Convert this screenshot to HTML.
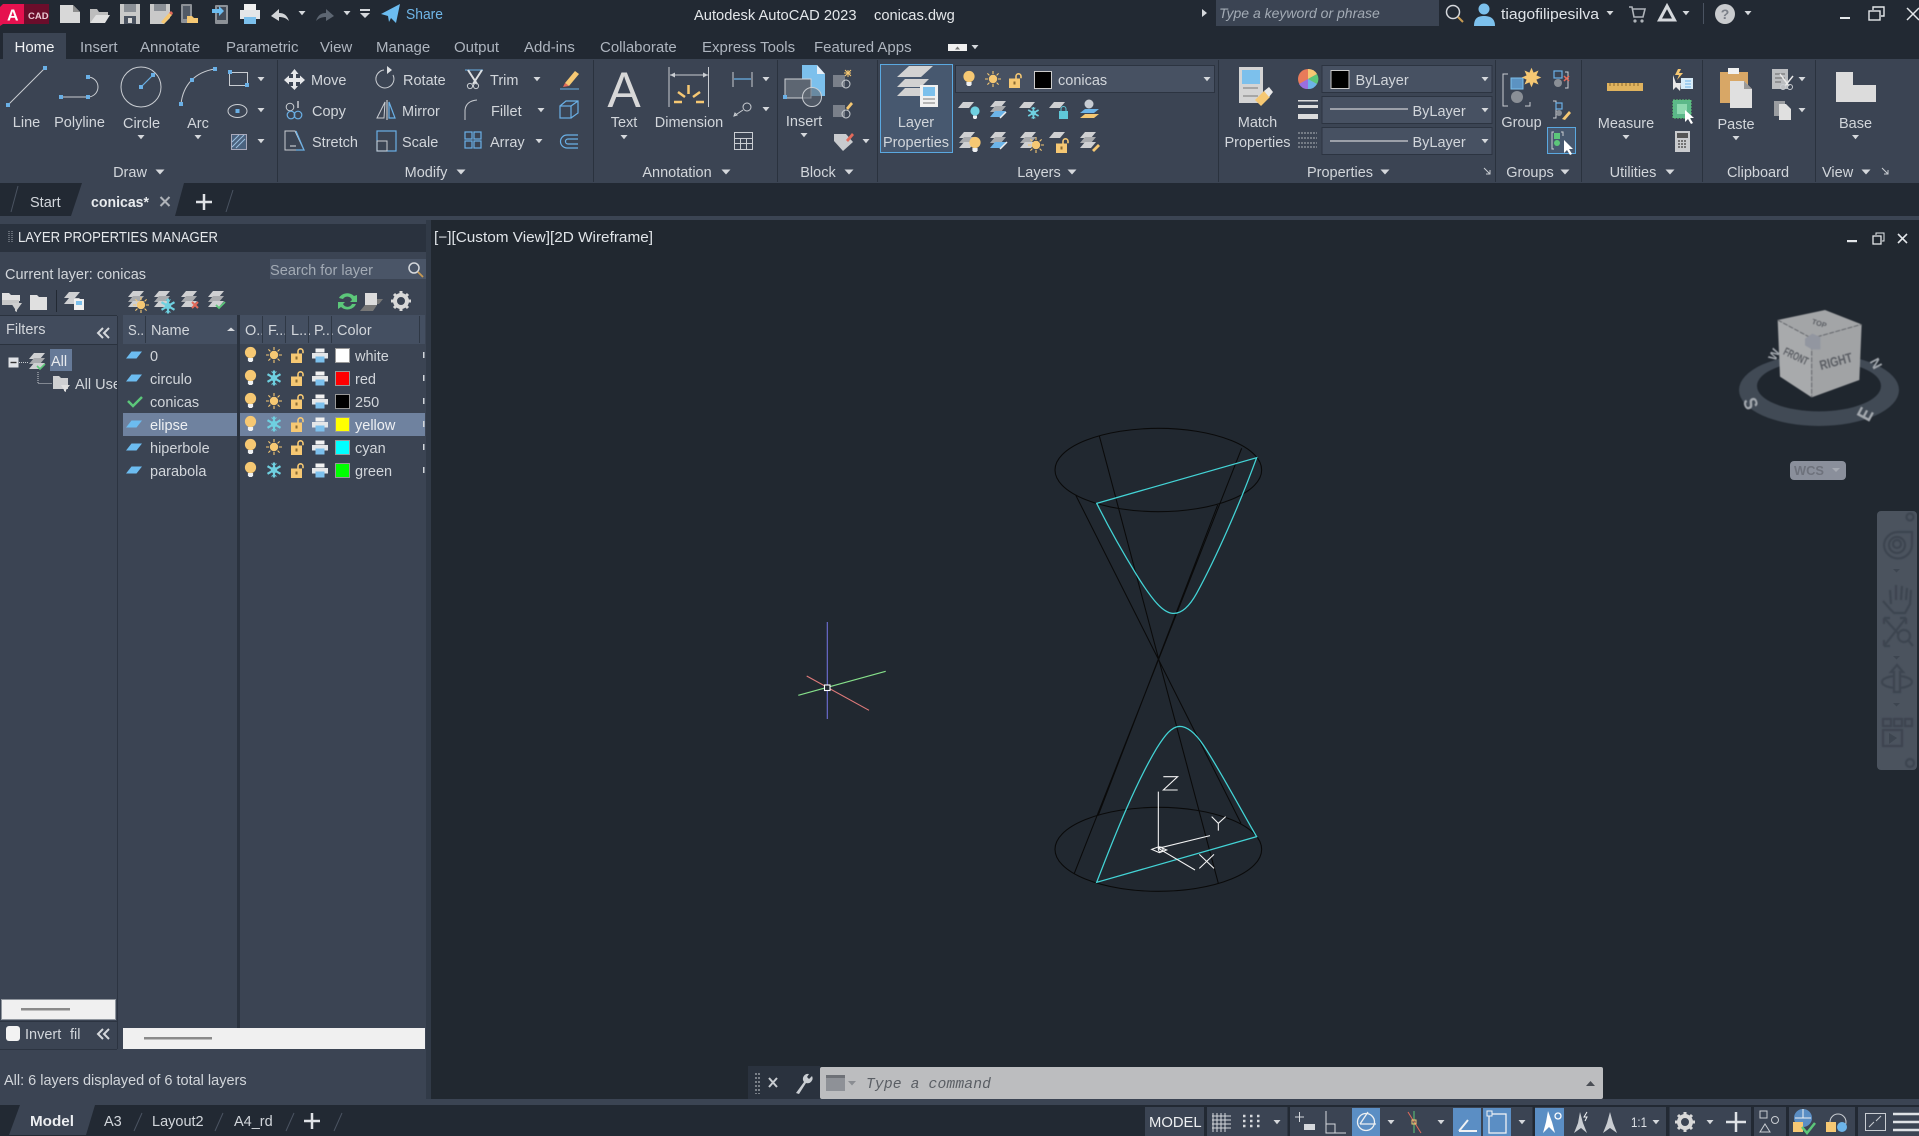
<!DOCTYPE html>
<html><head><meta charset="utf-8"><title>AutoCAD</title>
<style>
html,body{margin:0;padding:0;background:#212830;width:1919px;height:1136px;overflow:hidden}
svg{display:block;position:absolute;left:0;top:0}
text{font-family:"Liberation Sans",sans-serif;font-size:14.5px;fill:#dfe3e8}
.m{text-anchor:middle}
.t{font-size:15px;fill:#aeb5bf}
.p{fill:#d2d6db}
.g{fill:none;stroke:#c9cdd2;stroke-width:1}
.b{fill:none;stroke:#6ab0e6;stroke-width:1.2}
</style></head><body>
<svg width="1919" height="1136" viewBox="0 0 1919 1136" xmlns="http://www.w3.org/2000/svg">
<defs>
<path id="dn" d="M-3.5-2h7L0 2.2z" fill="#d5d8dc"/>
<path id="dl" d="M-4.5-2.5h9L0 2.5z" fill="#d5d8dc"/>
<rect id="h" x="-2" y="-2" width="4" height="4" fill="#6ab0e6"/>
<g id="bulb"><circle cy="-2.5" r="5.6" fill="#f6c873"/><path d="M-2.6 3h5.2v2.6l-1.2 1.4h-2.8l-1.2-1.4z" fill="#eef0f2"/></g>
<g id="bulbc"><circle cy="-2" r="4.6" fill="#6fd0e0"/><path d="M-2 2.6h4v2.4l-1 1h-2l-1-1z" fill="#eef0f2"/></g>
<g id="sun"><circle r="4.2" fill="#f6c873"/><path d="M0-8v3M0 5v3M-8 0h3M5 0h3M-5.6-5.6l2 2M3.6 3.6l2 2M-5.6 5.6l2-2M3.6-3.6l2-2" stroke="#f6c873" stroke-width="1.1"/></g>
<g id="snow"><path d="M0-7.5v15M-6.5-3.8l13 7.6M-6.5 3.8l13-7.6" stroke="#6fd0e0" stroke-width="2.2"/><circle r="3.2" fill="#6fd0e0"/><path d="M-2.500-6.500L0-4.500 2.500-6.500M-2.500 6.500L0 4.500 2.500 6.500" fill="none" stroke="#6fd0e0"/></g>
<g id="lock"><rect x="-7" y="-2.5" width="11" height="9.5" fill="#f6c873"/><rect x="-2.5" y="0.5" width="2" height="3" fill="#8a6a30"/><path d="M0-2.5v-2.2a2.5 2.5 0 0 1 5 0v2" fill="none" stroke="#f6c873" stroke-width="1.6"/></g>
<g id="prn"><rect x="-4.5" y="-7" width="9" height="4" fill="#f2f2f2"/><rect x="-8" y="-2.5" width="16" height="5.5" fill="#e4e6e8"/><rect x="-4.5" y="1" width="9" height="6" fill="#7cc0ec"/></g>
<path id="pl" d="M-8 3.5L-2.5-3.5H8L2.5 3.5z" fill="#6cbcf0"/>
<path id="pg" d="M-8 3L-3-3H8L3 3z" fill="#cfd0d2"/>
<g id="stk"><path d="M-8-2L-3-8H8L3-2z" fill="#cfd0d2"/><path d="M-8 3L-3-3H8L3 3z" fill="#a9abae"/><path d="M-8 8L-3 2H8L3 8z" fill="#cfd0d2"/></g>
<g id="stkb"><path d="M-8-2L-3-8H8L3-2z" fill="#cfd0d2"/><path d="M-8 3L-3-3H8L3 3z" fill="#a9abae"/><path d="M-8 8L-3 2H8L3 8z" fill="#6cb4e8"/></g>
</defs>

<!-- top chrome -->
<rect width="1919" height="1136" fill="#212830"/>
<rect x="0" y="0" width="1919" height="59" fill="#222933"/>
<rect x="0" y="59" width="1919" height="124" fill="#3b4453"/>
<rect x="0" y="183" width="1919" height="33" fill="#222933"/>
<rect x="0" y="216" width="1919" height="4" fill="#3b4453"/>

<!-- logo -->
<path d="M0 7l3-3h21v20H3l-3 2z" fill="#e6114f"/>
<text x="7" y="20.5" style="font-size:16px;font-weight:bold;fill:#fff">A</text>
<rect x="24" y="4" width="25" height="20" fill="#6b0d2b"/>
<text x="28" y="19" style="font-size:9.5px;font-weight:bold;fill:#e8c9d3">CAD</text>

<!-- QAT -->
<path d="M60 5h13l7 7v11H60z" fill="#d8d8d8"/><path d="M73 5v7h7z" fill="#8e8e8e"/>
<path d="M90 9h7l2 3h9v3H97l-7 8z" fill="#bdbdbd"/><path d="M96 15h14l-5 8H90z" fill="#e0e0e0"/>
<path d="M120 4h20v20h-20z" fill="#c9c9c9"/><rect x="124" y="4" width="12" height="8" fill="#8a8f96"/><rect x="124" y="16" width="12" height="8" fill="#4a5260"/><rect x="128" y="18" width="4" height="5" fill="#d8d8d8"/>
<path d="M150 4h20v14l-6 6h-14z" fill="#c9c9c9"/><rect x="154" y="4" width="12" height="7" fill="#8a8f96"/><path d="M161 22l8-9 3 2-8 9z" fill="#f6c873"/><path d="M169 13l3 2 1-2-2-2z" fill="#e36a5a"/>
<rect x="181" y="4" width="11" height="19" rx="1" fill="#8d9197"/><rect x="183" y="6" width="7" height="13" fill="#525a66"/><path d="M187 16h5l2 2h4v5h-11z" fill="#f6c873"/>
<rect x="215" y="5" width="13" height="19" rx="1" fill="#8d9197"/><rect x="217" y="7" width="9" height="13" fill="#424a57"/><path d="M212 9h7v-3l5 5-5 5v-3h-7z" fill="#6cbcf0"/>
<rect x="244" y="4" width="12" height="6" fill="#f0f0f0"/><rect x="240" y="10" width="20" height="9" fill="#e4e6e8"/><rect x="244" y="17" width="12" height="7" fill="#7cc0ec"/>
<path d="M271 16l8-7v4c5 0 8 2 10 8-3-3-6-4-10-4v4z" fill="#d2d4d7"/>
<use href="#dn" x="302" y="13"/>
<path d="M334 16l-8-7v4c-5 0-8 2-10 8 3-3 6-4 10-4v4z" fill="#5d6672"/>
<use href="#dn" x="347" y="13"/>
<path d="M360 9h10v2h-10zM360 13h10l-5 5z" fill="#d5d8dc"/>
<path d="M381 14l19-10-4 19-5-5-2 4-1-6z" fill="#6cbcf0"/>
<text x="406" y="19" textLength="37" lengthAdjust="spacingAndGlyphs" style="fill:#6fb6e8;font-size:14.5px">Share</text>

<!-- title -->
<text x="694" y="20" style="font-size:14.7px;fill:#e4e7ea">Autodesk AutoCAD 2023</text>
<text x="874" y="20" style="font-size:14.7px;fill:#e4e7ea">conicas.dwg</text>
<path d="M1202 9l5 4-5 4z" fill="#d5d8dc"/>
<rect x="1216" y="0" width="223" height="26" fill="#3b4453"/>
<text x="1219" y="18" style="font-style:italic;font-size:14px;fill:#a3abb5">Type a keyword or phrase</text>
<circle cx="1453" cy="12" r="6.5" fill="none" stroke="#d5d8dc" stroke-width="1.5"/><path d="M1458 17l5 5" stroke="#c79a52" stroke-width="2"/>
<circle cx="1484" cy="9" r="5.5" fill="#7cc0ec"/><path d="M1474 26c0-8 4-10 10-10s11 2 11 10z" fill="#7cc0ec"/>
<text x="1501" y="19" textLength="98" lengthAdjust="spacingAndGlyphs" style="font-size:14.6px">tiagofilipesilva</text>
<use href="#dn" x="1610" y="13"/>
<path d="M1629 7h3l2 10h9l2-8h-13" fill="none" stroke="#aeb3b9" stroke-width="1.6"/><circle cx="1635" cy="21" r="1.6" fill="#aeb3b9"/><circle cx="1642" cy="21" r="1.6" fill="#aeb3b9"/>
<path d="M1667 6l7.500 14h-15z" fill="none" stroke="#d5d8dc" stroke-width="3"/>
<use href="#dn" x="1686" y="13"/>
<rect x="1703" y="3" width="1" height="21" fill="#4a5361"/>
<circle cx="1725" cy="14" r="10" fill="#c9cbce"/><text x="1725" y="19" class="m" style="font-size:14px;font-weight:bold;fill:#7b8088">?</text>
<use href="#dn" x="1748" y="13"/>
<rect x="1840" y="17" width="10" height="2" fill="#e4e7ea"/>
<rect x="1869" y="11" width="11" height="9" fill="none" stroke="#e4e7ea" stroke-width="1.4"/><path d="M1873 10V7h11v9h-3" fill="none" stroke="#e4e7ea" stroke-width="1.4"/>
<path d="M1907 8l12 12M1919 8l-12 12" stroke="#e4e7ea" stroke-width="1.5"/>

<!-- ribbon tabs -->
<rect x="3" y="33" width="63" height="26" fill="#3b4453"/>
<text x="14.5" y="52" style="font-size:15px;fill:#f0f2f4">Home</text>
<text x="80" y="52" class="t">Insert</text><text x="140" y="52" class="t">Annotate</text><text x="226" y="52" class="t">Parametric</text><text x="320" y="52" class="t">View</text><text x="376" y="52" class="t">Manage</text><text x="454" y="52" class="t">Output</text><text x="524" y="52" class="t">Add-ins</text><text x="600" y="52" class="t">Collaborate</text><text x="702" y="52" class="t">Express Tools</text><text x="814" y="52" class="t">Featured Apps</text>
<rect x="948" y="44" width="19" height="7" fill="#f0f0f0"/><path d="M955 49.5h5l-2.5-3z" fill="#777"/><use href="#dn" x="975" y="47"/>

<!-- ribbon separators -->
<g fill="#2a323e"><rect x="277" y="60" width="1" height="122"/><rect x="593" y="60" width="1" height="122"/><rect x="777" y="60" width="1" height="122"/><rect x="877" y="60" width="1" height="122"/><rect x="1218" y="60" width="1" height="122"/><rect x="1495" y="60" width="1" height="122"/><rect x="1581" y="60" width="1" height="122"/><rect x="1702" y="60" width="1" height="122"/><rect x="1815" y="60" width="1" height="122"/></g>

<!-- DRAW -->
<path d="M8 105L45 68" class="g"/><use href="#h" x="8" y="105"/><use href="#h" x="45" y="68"/>
<path d="M61 97H88M88 97A10 10 0 0 0 88 77" class="g"/><use href="#h" x="61" y="97"/><use href="#h" x="88" y="97"/><use href="#h" x="88" y="77"/>
<circle cx="141" cy="87" r="20" class="g"/><path d="M141 87L153 75" stroke="#6ab0e6" stroke-width="1.2"/><use href="#h" x="141" y="87"/><use href="#h" x="153" y="75"/>
<path d="M181 104C183 85 195 72 215 69" class="g"/><use href="#h" x="181" y="104"/><use href="#h" x="192" y="80"/><use href="#h" x="215" y="69"/>
<text x="26.5" y="127" class="m p">Line</text><text x="79.5" y="127" class="m p">Polyline</text><text x="141.5" y="128" class="m p">Circle</text><text x="198" y="128" class="m p">Arc</text>
<use href="#dn" x="141" y="137"/><use href="#dn" x="198" y="137"/>
<rect x="229.500" y="72.500" width="18" height="13" class="g"/><use href="#h" x="230" y="72"/><use href="#h" x="247" y="85"/>
<ellipse cx="237.5" cy="111" rx="9.5" ry="6.5" class="g"/><use href="#h" x="237.5" y="111"/><use href="#dn" x="261" y="79"/><use href="#dn" x="261" y="110"/><use href="#dn" x="261" y="141"/>
<rect x="231.500" y="134.500" width="15" height="15" fill="#4b627e" stroke="#aab" stroke-width="1"/><path d="M232 147l12-12M236 148l9-9M232 142l7-7" stroke="#9cc0e0"/>
<text x="130" y="177" class="m p">Draw</text><use href="#dl" x="160" y="172"/>

<!-- MODIFY -->
<path d="M294.5 69l4 5h-2.5v4h4v-2.5l5 4.500-5 4.500V82h-4v4H298l-3.500 4-4-4H293v-4h-4v2.500l-5-4.500 5-4.500V78h4v-4h-2.500z" fill="#e6e8ea"/>
<text x="311" y="85" class="p">Move</text><text x="312" y="116" class="p">Copy</text><text x="312" y="147" class="p">Stretch</text>
<circle cx="290" cy="107" r="3.800" class="g"/><circle cx="291" cy="115" r="3.800" class="b"/><circle cx="298" cy="115" r="3.800" class="b"/><path d="M298 101v7" stroke="#dcdfe2" stroke-width="1.300"/>
<path d="M285 131h10l9 19h-19z M285 150" class="g"/><path d="M296 131l8 19h-8" class="b"/><path d="M290 146h6" stroke="#dfe2e6"/>
<path d="M384 70a9 9 0 1 0 9 5" class="g"/><path d="M387 66l5 4-5 4z" fill="#dcdfe2"/>
<text x="403" y="85" class="p">Rotate</text><text x="402" y="116" class="p">Mirror</text><text x="402" y="147" class="p">Scale</text>
<path d="M385 102L377 118h7z" class="g"/><path d="M389 102l6 16h-6z" class="b"/><path d="M387 100v20" stroke="#dcdfe2"/>
<rect x="377" y="131" width="19" height="20" class="b"/><rect x="377" y="141" width="10" height="10" class="g"/>
<path d="M465 70h18" stroke="#6ab0e6"/><path d="M468 70l9 14M482 70l-9 14" stroke="#dcdfe2" stroke-width="2"/><circle cx="470" cy="86" r="2.600" class="g"/><circle cx="476" cy="86" r="2.600" class="g"/>
<text x="490" y="85" class="p">Trim</text><text x="491" y="116" class="p">Fillet</text><text x="490" y="147" class="p">Array</text>
<use href="#dn" x="537" y="79"/><use href="#dn" x="541" y="110"/><use href="#dn" x="539" y="141"/>
<path d="M465 120v-10q1-9 12-10" class="g"/>
<g class="b"><rect x="465" y="132" width="7" height="7"/><rect x="474" y="132" width="7" height="7"/><rect x="465" y="141" width="7" height="7"/><rect x="474" y="141" width="7" height="7"/></g>
<path d="M565 83l10-12 4 3-10 12z" fill="#f6c873"/><path d="M563 87l2-4 4 3z" fill="#e36a5a"/><path d="M560 89h19" stroke="#6ab0e6"/>
<rect x="560" y="106" width="11" height="12" class="b"/><path d="M560 106l6-5h12v12l-7 5M571 106l7-5" class="b"/>
<path d="M578 135h-11a6 6 0 0 0 0 13h11M578 139h-10a2.500 2.500 0 0 0 0 5h10" class="b"/>
<text x="426" y="177" class="m p">Modify</text><use href="#dl" x="461" y="172"/>

<!-- ANNOTATION -->
<text x="624" y="107" class="m" style="font-size:50px;fill:#d8d8d8">A</text>
<text x="624" y="127" class="m p">Text</text><use href="#dn" x="624" y="137"/>
<path d="M669 67v40M708.500 67v40" stroke="#c9cdd2"/><path d="M670 75h38" stroke="#c9cdd2"/><path d="M670 75l5-2.500v5zM708 75l-5-2.500v5z" fill="#c9cdd2"/>
<path d="M688.500 85v9M678 92l7 5M700 92l-7 5M674 102h8M704 102h-8" stroke="#f6c873" stroke-width="2.500"/>
<text x="689" y="127" class="m p">Dimension</text>
<path d="M733 72v15M752 72v15" stroke="#c9cdd2"/><path d="M734 79h17" stroke="#6ab0e6" stroke-width="1.300"/><use href="#dn" x="766" y="79"/>
<circle cx="747" cy="107" r="4" class="g"/><path d="M743 110l-9 6M734 116l3-1-2-2z" class="g"/><use href="#dn" x="766" y="109"/>
<rect x="734.500" y="132.500" width="18" height="17" class="g"/><path d="M734 138.500h18M734 143.500h18M740.500 138v11M746.500 138v11" stroke="#c9cdd2"/>
<text x="677" y="177" class="m p">Annotation</text><use href="#dl" x="726" y="172"/>

<!-- BLOCK -->
<path d="M802 65h15l8 9v22h-23z" fill="#7cc0ec"/><path d="M817 65v9h8z" fill="#e6eef6"/>
<rect x="785" y="79" width="26" height="19" fill="#5d6672" stroke="#cfd2d6"/><circle cx="812" cy="97" r="9.500" fill="#5d6672" fill-opacity=".6" stroke="#c9cdd2"/><use href="#h" x="785" y="97" style="fill:#fff"/>
<text x="804" y="126" class="m p">Insert</text><use href="#dn" x="804" y="135"/>
<g><rect x="833" y="75" width="12" height="12" fill="#7a808a"/><circle cx="846" cy="84" r="4" class="g"/><path d="M848 77l0-7M844 73l7 0M845 70l6 6M851 70l-6 6" stroke="#f6c873"/></g>
<g><rect x="833" y="105" width="12" height="12" fill="#7a808a"/><circle cx="846" cy="114" r="4" class="g"/><path d="M846 108l5-6 2 2-5 6z" fill="#f6c873"/></g>
<path d="M834 134h12l7 8-10 9-9-10z" fill="#c9cbce"/><path d="M846 140l6-7 2 2-6 7z" fill="#e36a5a"/><use href="#dn" x="866" y="141"/>
<text x="818" y="177" class="m p">Block</text><use href="#dl" x="849" y="172"/>

<!-- LAYERS -->
<rect x="880.500" y="64.500" width="72" height="88" fill="#47586f" stroke="#5aa8e0"/>
<path d="M897 87l8-8h24l-8 8zM897 77l12-11h24l-12 11z" fill="#d2d2d2"/><path d="M897 96l8-8h24l-8 8z" fill="#d2d2d2"/>
<rect x="920" y="85" width="18" height="22" fill="#f0f0f0"/><rect x="923" y="87" width="12" height="9" fill="#7cc0ec"/><path d="M923 99h12M923 103h12" stroke="#777"/>
<text x="916" y="127" class="m p">Layer</text><text x="916" y="147" class="m p">Properties</text>
<rect x="955.500" y="65.500" width="259" height="27" fill="#475162" stroke="#2c3441"/>
<use href="#bulb" x="969" y="79"/><use href="#sun" x="993" y="79"/><use href="#lock" x="1016" y="81"/>
<rect x="1034.500" y="71.500" width="17" height="17" fill="#000" stroke="#ccc"/>
<text x="1058" y="85" class="p">conicas</text><use href="#dn" x="1207" y="79"/>
<!-- layer rows -->
<use href="#pg" x="966" y="105"/><use href="#bulbc" x="975" y="113"/>
<use href="#stkb" x="998" y="109"/><path d="M1000 118l6-6" stroke="#eee" stroke-width="1.500"/>
<use href="#pg" x="1027" y="105"/><use href="#snow" x="1033" y="113" transform="translate(207 22.600) scale(.8)"/>
<use href="#pg" x="1057" y="105"/><rect x="1059" y="111" width="9" height="8" fill="#5fc8d8"/><path d="M1061 111v-2a2.500 2.500 0 0 1 5 0v2" fill="none" stroke="#5fc8d8"/>
<circle cx="1089" cy="104" r="4.500" fill="#c8ccd2"/><path d="M1080 113l5-4h14l-5 4z" fill="#6cb4e8"/><path d="M1080 118l5-4h14l-5 4z" fill="#f6c873"/>
<use href="#stk" x="967" y="140"/><use href="#bulb" x="975" y="145"/>
<use href="#stkb" x="998" y="140"/><path d="M1000 149l7-7" stroke="#eee" stroke-width="1.500"/>
<use href="#stk" x="1028" y="140"/><use href="#sun" x="1036" y="145"/>
<use href="#pg" x="1057" y="135"/><use href="#lock" x="1063" y="146"/>
<use href="#stk" x="1088" y="140"/><path d="M1092 150l6-6 2 2-6 6z" fill="#f6c873"/>
<text x="1039" y="177" class="m p">Layers</text><use href="#dl" x="1072" y="172"/>

<!-- PROPERTIES -->
<rect x="1239" y="67" width="24" height="36" fill="#d4d4d4"/><rect x="1242" y="70" width="18" height="14" fill="#7cc0ec"/><path d="M1243 88h15M1243 96h15" stroke="#777"/>
<path d="M1255 100l9-9 6 6-9 9z" fill="#f6c873"/><path d="M1264 91l5-4 4 5-4 5z" fill="#e8e8e8"/>
<text x="1257.500" y="127" class="m p">Match</text><text x="1257.500" y="147" class="m p">Properties</text>
<circle cx="1308" cy="79" r="10" fill="#e87b5a"/><path d="M1308 79V69a10 10 0 0 1 9 5z" fill="#f6c873"/><path d="M1308 79l9-5a10 10 0 0 1 0 10z" fill="#5cc77a"/><path d="M1308 79l9 5a10 10 0 0 1-9 5z" fill="#6cb4e8"/><path d="M1308 79v10a10 10 0 0 1-9-5z" fill="#9a6fe0"/>
<rect x="1298" y="100" width="20" height="1.500" fill="#dcdcdc"/><rect x="1298" y="105" width="20" height="3" fill="#dcdcdc"/><rect x="1298" y="114" width="20" height="5" fill="#dcdcdc"/>
<path d="M1298 133h19M1298 138h19M1298 143h19M1298 147h19" stroke="#aeb2b7" stroke-dasharray="2 1"/>
<rect x="1322" y="65.500" width="170" height="27" fill="#475162" stroke="#2c3441"/><rect x="1322" y="96.500" width="170" height="27" fill="#475162" stroke="#2c3441"/><rect x="1322" y="127.500" width="170" height="27" fill="#475162" stroke="#2c3441"/>
<rect x="1331" y="70.500" width="18" height="18" fill="#000" stroke="#ccc"/>
<text x="1355.500" y="85" class="p">ByLayer</text>
<path d="M1330 109h78M1330 141h78" stroke="#f0f0f0"/>
<text x="1412.500" y="116" class="p">ByLayer</text><text x="1412.500" y="147" class="p">ByLayer</text>
<use href="#dn" x="1485" y="79"/><use href="#dn" x="1485" y="110"/><use href="#dn" x="1485" y="141"/>
<text x="1340" y="177" class="m p">Properties</text><use href="#dl" x="1385" y="172"/>
<path d="M1484 168l6 6M1490 170v4h-4" stroke="#c9cdd2" fill="none"/>

<!-- GROUPS -->
<path d="M1508 74h-5v32h5M1525 106h5v-4" class="g"/><rect x="1511" y="78" width="12" height="11" fill="#5c93c2" stroke="#7cc0ec"/><circle cx="1517" cy="97" r="6" fill="#8a8f96"/>
<path transform="translate(1531.500 77.500) scale(.7) translate(-1530 -81)" d="M1530 67l3 7 7-3-3 7 7 3-7 3 3 7-7-3-3 7-3-7-7 3 3-7-7-3 7-3-3-7 7 3z" fill="#f6c873"/>
<text x="1521.500" y="127" class="m p">Group</text>
<rect x="1554" y="71" width="8" height="7" class="b"/><circle cx="1558" cy="83" r="4" fill="#8a8f96"/><path d="M1565 72h3v16h-3" class="g"/><path d="M1564 76l5 5M1569 76l-5 5" stroke="#e36a5a" stroke-width="1.500"/>
<path d="M1553 101h3v17h-3M1555 101" class="g"/><rect x="1556" y="103" width="6" height="6" class="b"/><circle cx="1559" cy="113" r="3" fill="#8a8f96"/><path d="M1562 119l7-8 2 2-6 7z" fill="#f6c873"/>
<rect x="1547.500" y="127.500" width="28" height="26" fill="#47586f" stroke="#5aa8e0"/><path d="M1554 132h-2v17h2M1561 132h2v4" class="g"/><rect x="1554" y="133" width="6" height="6" fill="#5cc77a"/><circle cx="1557" cy="143" r="3" fill="#5cc77a"/><path d="M1564 140v13l3-3 3 5 2-1-3-5h4z" fill="#fff"/>
<text x="1530" y="177" class="m p">Groups</text><use href="#dl" x="1565" y="172"/>

<!-- UTILITIES -->
<rect x="1607" y="83" width="36" height="8" fill="#e0b35e"/><path d="M1610 83v3M1614 83v3M1618 83v3M1622 83v3M1626 83v3M1630 83v3M1634 83v3M1638 83v3" stroke="#8a6a30"/>
<text x="1626" y="128" class="m p">Measure</text><use href="#dn" x="1626" y="137"/>
<path d="M1673 75v15l3-3 4 4 1-8h-5z" fill="#e8e8e8"/><path d="M1678 69l-3 6h4l-2 5 6-7h-4l2-4z" fill="#f6c873"/><rect x="1681" y="78" width="12" height="11" fill="#d8ecf8"/><path d="M1685 81h6M1685 84h6M1685 87h6" stroke="#6ab0e6"/>
<rect x="1673" y="100" width="18" height="18" fill="#5cb88a" stroke="#5cc77a" stroke-dasharray="2 1"/><rect x="1677" y="104" width="10" height="10" fill="#8ed9b0"/><path d="M1685 110v12l3-3 3 5 2-1-3-5h4z" fill="#fff"/>
<rect x="1675" y="131" width="15" height="21" fill="#c9cbce"/><rect x="1677" y="133" width="11" height="5" fill="#555"/><path d="M1678 141h9M1678 144h9M1678 147h9" stroke="#555" stroke-width="1.500" stroke-dasharray="2 1"/>
<text x="1633" y="177" class="m p">Utilities</text><use href="#dl" x="1670" y="172"/>

<!-- CLIPBOARD -->
<rect x="1720" y="72" width="28" height="31" fill="#d8a766"/><rect x="1728" y="68" width="11" height="6" fill="#f0f0f0"/><path d="M1730 81h14l8 8v19h-22z" fill="#e0e0e0"/><path d="M1744 81v8h8z" fill="#9a9a9a"/>
<text x="1736" y="129" class="m p">Paste</text><use href="#dn" x="1736" y="138"/>
<rect x="1772" y="69" width="16" height="20" fill="#bcbec1"/><path d="M1775 74h10M1775 78h10M1775 82h6" stroke="#666"/><path d="M1780 74l9 12M1793 76l-8 10" stroke="#e8e8e8" stroke-width="1.500"/><circle cx="1783" cy="87" r="2.500" class="g"/><circle cx="1790" cy="87" r="2.500" class="g"/><use href="#dn" x="1802" y="79"/>
<rect x="1774" y="101" width="11" height="15" fill="#9a9da1"/><path d="M1779 104h7l5 5v11h-12z" fill="#e0e0e0"/><use href="#dn" x="1802" y="110"/>
<text x="1758" y="177" class="m p">Clipboard</text>

<!-- VIEW -->
<path d="M1836 72h17v13h23v17h-40z" fill="#dcdcdc"/>
<text x="1855.500" y="128" class="m p">Base</text><use href="#dn" x="1855.500" y="137"/>
<text x="1822" y="177" class="p">View</text><use href="#dl" x="1866" y="172"/>
<path d="M1882 168l6 6M1888 170v4h-4" stroke="#c9cdd2" fill="none"/>

<!-- DOC TABS -->
<path d="M11 212l7-26" stroke="#4a5361"/>
<text x="30" y="207" class="p">Start</text>
<path d="M71 216l11-33h102l-9 33z" fill="#3b4453"/>
<text x="91" y="207" textLength="58" lengthAdjust="spacingAndGlyphs" style="font-weight:bold;fill:#e8ebee">conicas*</text>
<path d="M160.500 197l9 9M169.500 197l-9 9" stroke="#aeb2b8" stroke-width="2"/>
<path d="M204 194v16M196 202h16" stroke="#dfe2e6" stroke-width="2.500"/>
<path d="M226 212l7-22" stroke="#4a5361"/>

<!-- VIEWPORT -->
<text x="434" y="242" textLength="219" lengthAdjust="spacingAndGlyphs" style="font-size:14.8px;fill:#e0e4e8">[−][Custom View][2D Wireframe]</text>
<rect x="1847" y="240" width="10" height="2.200" fill="#e4e7ea"/>
<rect x="1873" y="236" width="8" height="8" fill="none" stroke="#e4e7ea" stroke-width="1.300"/><path d="M1876 235v-2h8v8h-2" fill="none" stroke="#e4e7ea"/>
<path d="M1898 234l9 9M1907 234l-9 9" stroke="#e4e7ea" stroke-width="1.600"/>

<!-- LAYER MANAGER -->
<rect x="0" y="220" width="426" height="880" fill="#3b4453"/>
<rect x="426" y="220" width="5" height="885" fill="#313a47"/>
<rect x="0" y="224" width="426" height="28" fill="#2a323e"/>
<path d="M9 231v11M12 231v11" stroke="#a0a6ae" stroke-dasharray="1 1"/>
<text x="18" y="242" textLength="200" lengthAdjust="spacingAndGlyphs" style="font-size:14.5px;fill:#e6e9ec">LAYER PROPERTIES MANAGER</text>
<text x="5" y="279" class="p">Current layer: conicas</text>
<rect x="270" y="259" width="156" height="20" fill="#4a5567"/>
<text x="270" y="275" textLength="103" lengthAdjust="spacingAndGlyphs" style="fill:#a3abb5">Search for layer</text>
<circle cx="414" cy="268" r="5" fill="none" stroke="#d5d8dc" stroke-width="1.500"/><path d="M418 272l5 5" stroke="#c79a52" stroke-width="1.800"/>
<!-- toolbar -->
<path d="M2 293h7l2 2h9v6H2z" fill="#e0e0e0"/><path d="M2 300h17v5h-17z" fill="#c8c8c8"/><path d="M11 303h11l-5 7v2l-2-1v-2z" fill="#cfcfcf"/>
<path d="M30 295h7l2 2h8v13H30z" fill="#e0e0e0"/>
<rect x="56" y="290" width="1" height="22" fill="#222933"/>
<use href="#pg" x="72" y="295"/><use href="#pg" x="72" y="301"/><rect x="74" y="299" width="10" height="11" fill="#f0f0f0"/><rect x="76" y="301" width="6" height="4" fill="#7cc0ec"/>
<use href="#stk" x="136" y="299"/><use href="#sun" x="141" y="305"/>
<use href="#stk" x="162" y="299"/><use href="#snow" x="168" y="306"/>
<use href="#stk" x="189" y="299"/><path d="M192 302l6 6M198 302l-6 6" stroke="#e36a5a" stroke-width="2"/>
<use href="#stk" x="216" y="299"/><path d="M216 305l3 3 6-6" fill="none" stroke="#5cc77a" stroke-width="1.800"/>
<path d="M339 298a9 8 0 0 1 15-2l3-1v7h-7l2-2a5 5 0 0 0-9-1zM356 304a9 8 0 0 1-15 3l-3 2v-7h7l-2 2a5 5 0 0 0 9 0z" fill="#5cc77a"/>
<rect x="365" y="293" width="12" height="12" fill="#dcdcdc"/><path d="M377 299h6l-4 5h-2zM365 305h12l-4 6h-13z" fill="#777"/>
<circle cx="401" cy="301" r="6" fill="none" stroke="#d8d8d8" stroke-width="4"/><path d="M401 291v4M401 307v4M391 301h4M407 301h4M394 294l3 3M405 305l3 3M408 294l-3 3M397 305l-3 3" stroke="#d8d8d8" stroke-width="3"/>
<!-- headers -->
<rect x="0" y="316" width="117" height="28" fill="#414b5c"/>
<rect x="123" y="315" width="114" height="29" fill="#444f61"/><rect x="240" y="315" width="185" height="29" fill="#444f61"/>
<path d="M0 344.500H117" stroke="#2a323e"/><path d="M0 315.500H117" stroke="#2a323e"/>
<rect x="117" y="316" width="1" height="733" fill="#2c3441"/>
<rect x="237" y="315" width="3" height="713" fill="#2a323e"/>
<text x="6" y="334" class="p">Filters</text>
<path d="M103 328l-5 5 5 5M109 328l-5 5 5 5" fill="none" stroke="#d5d8dc" stroke-width="2"/>
<text x="128" y="335" textLength="16" lengthAdjust="spacingAndGlyphs" class="p">S..</text><text x="151" y="335" class="p">Name</text><path d="M227 331h8l-4-3.500z" fill="#d5d8dc"/>
<text x="245" y="335" class="p">O..</text><text x="268" y="335" class="p">F...</text><text x="291" y="335" class="p">L...</text><text x="314" y="335" class="p">P...</text><text x="337" y="335" class="p">Color</text>
<g fill="#2f3845"><rect x="145" y="316" width="1" height="27"/><rect x="262" y="316" width="1" height="27"/><rect x="285" y="316" width="1" height="27"/><rect x="308" y="316" width="1" height="27"/><rect x="331" y="316" width="1" height="27"/><rect x="419" y="316" width="1" height="27"/></g>
<!-- tree -->
<rect x="8.500" y="357.500" width="10" height="10" fill="#dfe2e6"/><path d="M10.500 362.500h6" stroke="#333" stroke-width="1.400"/>
<path d="M19 362.500h10" stroke="#c8ccd0" stroke-dasharray="1 1"/>
<use href="#stk" x="37" y="361"/><path d="M37 366l3 3 5-5" fill="none" stroke="#5cc77a" stroke-width="1.600"/>
<rect x="50" y="349" width="22" height="22" fill="#667a98"/><text x="51" y="366" style="fill:#e8ebee">All</text>
<path d="M38 372v11.500H52" stroke="#c8ccd0" stroke-dasharray="1 1" fill="none"/>
<path d="M53 376h6l2 2h7v11H53z" fill="#cfd0d2"/><path d="M61 385h9l-4 5v2l-2-1v-1z" fill="#e0e0e0"/>
<svg x="0" y="370" width="117" height="30"><text x="75" y="19" class="p">All User Defined</text></svg>
<!-- rows -->
<rect x="123" y="413" width="114" height="23" fill="#6f829f"/><rect x="240" y="413" width="185" height="23" fill="#6f829f"/>
<use href="#pl" x="134" y="355"/><use href="#pl" x="134" y="378"/>
<path d="M128 401l5 5 9-9" fill="none" stroke="#5cc77a" stroke-width="2.500"/>
<use href="#pl" x="134" y="424"/><use href="#pl" x="134" y="447"/><use href="#pl" x="134" y="470"/>
<text x="150" y="361" class="p">0</text><text x="150" y="384" class="p">circulo</text><text x="150" y="407" class="p">conicas</text><text x="150" y="430" class="p" style="fill:#eef0f3">elipse</text><text x="150" y="453" class="p">hiperbole</text><text x="150" y="476" class="p">parabola</text>
<g>
<use href="#bulb" x="250.500" y="355"/><use href="#sun" x="274" y="355"/><use href="#lock" x="298" y="356"/><use href="#prn" x="320" y="355.500"/>
<use href="#bulb" x="250.500" y="378"/><use href="#snow" x="274" y="378"/><use href="#lock" x="298" y="379"/><use href="#prn" x="320" y="378.500"/>
<use href="#bulb" x="250.500" y="401"/><use href="#sun" x="274" y="401"/><use href="#lock" x="298" y="402"/><use href="#prn" x="320" y="401.500"/>
<use href="#bulb" x="250.500" y="424"/><use href="#snow" x="274" y="424"/><use href="#lock" x="298" y="425"/><use href="#prn" x="320" y="424.500"/>
<use href="#bulb" x="250.500" y="447"/><use href="#sun" x="274" y="447"/><use href="#lock" x="298" y="448"/><use href="#prn" x="320" y="447.500"/>
<use href="#bulb" x="250.500" y="470"/><use href="#snow" x="274" y="470"/><use href="#lock" x="298" y="471"/><use href="#prn" x="320" y="470.500"/>
</g>
<g stroke="#999" stroke-width="1"><rect x="335.500" y="348.500" width="14" height="14" fill="#fff"/><rect x="335.500" y="371.500" width="14" height="14" fill="#f00"/><rect x="335.500" y="394.500" width="14" height="14" fill="#000"/><rect x="335.500" y="417.500" width="14" height="14" fill="#ff0"/><rect x="335.500" y="440.500" width="14" height="14" fill="#0ff"/><rect x="335.500" y="463.500" width="14" height="14" fill="#0f0"/></g>
<text x="355" y="361" class="p">white</text><text x="355" y="384" class="p">red</text><text x="355" y="407" class="p">250</text><text x="355" y="430" class="p" style="fill:#eef0f3">yellow</text><text x="355" y="453" class="p">cyan</text><text x="355" y="476" class="p">green</text>
<g fill="#d2d6db"><rect x="423" y="352" width="1.500" height="6"/><rect x="423" y="375" width="1.500" height="6"/><rect x="423" y="398" width="1.500" height="6"/><rect x="423" y="421" width="1.500" height="6"/><rect x="423" y="444" width="1.500" height="6"/><rect x="423" y="467" width="1.500" height="6"/></g>
<!-- panel bottom -->
<rect x="1.500" y="999.500" width="114" height="20" fill="#f0f0f0" stroke="#8f959d"/><rect x="21" y="1008" width="49" height="2.500" fill="#8a8a8a"/>
<rect x="6" y="1026" width="14" height="15" rx="3" fill="#f2f2f2"/>
<text x="25" y="1039" class="p">Invert</text><text x="70" y="1039" class="p">fil</text>
<path d="M103 1029l-5 5 5 5M109 1029l-5 5 5 5" fill="none" stroke="#d5d8dc" stroke-width="2"/>
<path d="M0 1049.500H117M0 1021.500H117" stroke="#2c3441"/>
<rect x="123" y="1028" width="302" height="21" fill="#f0f0f0"/><rect x="144" y="1037" width="68" height="2.500" fill="#8a8a8a"/>
<text x="4" y="1085" class="p">All: 6 layers displayed of 6 total layers</text>

<!-- CANVAS GEOMETRY -->
<g transform="translate(1040 420) scale(.33333)" fill="none" stroke-width="3.200">
<g stroke="#0a0a0a">
<ellipse cx="355" cy="150" rx="310" ry="125"/>
<ellipse cx="355" cy="1288" rx="310" ry="126"/>
<path d="M178 48L535 1390M605 85L103 1360M107 225L603 1210M533 255L175 1185"/>
</g>
<g stroke="#43d4d6" stroke-width="3.800">
<path d="M170 250L650 113C600 250 530 410 470 520C445 565 420 582 398 580C370 578 340 545 290 465C250 400 210 330 170 250z"/>
<path d="M650 1250L170 1387C230 1230 290 1085 350 985C375 945 395 920 418 919C445 919 470 945 490 975C540 1050 600 1165 650 1250z"/>
</g>
<g stroke="#f4f4f4">
<path d="M355 1115V1285L510 1247M355 1285L465 1350"/>
<path d="M335 1288L357 1280L380 1290L358 1298z"/><circle cx="362" cy="1288" r="7"/>
<path d="M370 1070H413L370 1110H413"/>
<path d="M515 1190L535 1210L557 1190M535 1210V1232"/>
<path d="M478 1345L522 1303M478 1303L522 1345"/>
</g>
</g>
<!-- crosshair -->
<g fill="none" stroke-width="1.100">
<path d="M827.300 622V719" stroke="#6f6fd8"/>
<path d="M798.300 695.300L885.700 671.300" stroke="#86e08a"/>
<path d="M806.700 676L869 710.300" stroke="#e07a7a"/>
<rect x="824.500" y="685" width="5.500" height="5.500" stroke="#fff" fill="#212830"/>
</g>

<!-- VIEWCUBE -->
<g transform="translate(1700 290) scale(.33333)" style="filter:blur(1.200px)">
<ellipse cx="357" cy="300" rx="240" ry="108" fill="#414a55"/>
<ellipse cx="357" cy="288" rx="186" ry="76" fill="#1f262e"/>
<text x="0" y="0" class="m" transform="translate(148 342) rotate(70) scale(1 1.150)" style="font-size:50px;font-weight:bold;fill:#a3a8ae;dominant-baseline:middle">S</text>
<text x="0" y="0" class="m" transform="translate(500 375) rotate(-62) scale(1 1.200)" style="font-size:52px;font-weight:bold;fill:#a3a8ae;dominant-baseline:middle">E</text>
<text x="0" y="0" class="m" transform="translate(525 222) rotate(62)" style="font-size:42px;font-weight:bold;fill:#a3a8ae;dominant-baseline:middle">N</text>
<text x="0" y="0" class="m" transform="translate(225 195) rotate(-62)" style="font-size:36px;font-weight:bold;fill:#a3a8ae;dominant-baseline:middle">W</text>
<path d="M233 90L375 60L485 103L335 145z" fill="#a3a5a7"/>
<path d="M233 90L335 145V322L240 260z" fill="#a8aaac"/>
<path d="M335 145L485 103L478 270L335 322z" fill="#a1a3a5"/>
<path d="M233 90L335 145L485 103M335 145V322" fill="none" stroke="#63666b" stroke-width="3" stroke-dasharray="14 5"/>
<path d="M315 146l22-15 24 10v37l-25 0-21-12z" fill="#9296a0"/>
<text x="0" y="0" transform="translate(248 192) rotate(26)" textLength="78" lengthAdjust="spacingAndGlyphs" style="font-size:34px;font-weight:bold;fill:#5b5e64">FRONT</text>
<text x="0" y="0" transform="translate(363 240) rotate(-15)" textLength="100" lengthAdjust="spacingAndGlyphs" style="font-size:40px;font-weight:bold;fill:#5b5e64">RIGHT</text>
<text x="358" y="108" class="m" transform="rotate(18 358 100)" style="font-size:22px;font-weight:bold;fill:#5b5e64">TOP</text>
</g>
<rect x="1790" y="461" width="56" height="19" rx="4" fill="#8a8f9b"/>
<text x="1794" y="475" textLength="30" lengthAdjust="spacingAndGlyphs" style="font-size:12.500px;font-weight:bold;fill:#6e727c">WCS</text>
<path d="M1832 468h8l-4 4z" fill="#a5a9b2"/>

<!-- NAVBAR -->
<rect x="1877" y="511" width="40" height="259" rx="4" fill="#4b535e"/>
<g fill="none" stroke="#3d4550" stroke-width="2.200" style="filter:blur(.4px)">
<circle cx="1910" cy="517" r="3.500"/>
<path d="M1884 545a14 14 0 0 1 14-13h14v12a14 14 0 0 1-28 1z"/><circle cx="1897" cy="545" r="8"/><circle cx="1897" cy="544" r="4"/>
<path d="M1883 601l7 8 4 4h11l5-9 1-14M1891 604l-1-14M1896 600v-15M1901 600l1-14M1906 600l1-12"/>
<path d="M1884 618l22 24M1906 618l-22 28M1884 618v6M1884 618h6M1906 618h-6M1906 618v6M1884 646v-6M1884 646h6"/><circle cx="1904" cy="636" r="6" fill="#4b535e"/><path d="M1908 640l5 6"/>
<ellipse cx="1897" cy="682" rx="15" ry="6"/><path d="M1894 672v20h6v-20h3l-6-7-6 7z" fill="#4b535e"/>
<rect x="1883" y="719" width="8" height="7"/><rect x="1894" y="719" width="8" height="7"/><rect x="1905" y="719" width="7" height="7"/>
<rect x="1883" y="730" width="19" height="16"/>
<circle cx="1910" cy="763" r="4"/>
</g>
<path d="M1889 733l8 5-8 6z" fill="#3d4550"/>
<g fill="#3d4550"><path d="M1893 569h7l-3.500 3.500z"/><path d="M1893 656h7l-3.500 3.500z"/><path d="M1893 703h7l-3.500 3.500z"/></g>

<!-- COMMAND LINE -->
<rect x="748" y="1066" width="72" height="33" fill="#2a323e"/>
<path d="M756 1073v21M759 1073v21" stroke="#c9cdd2" stroke-dasharray="2 2"/>
<path d="M769 1078l8 9M777 1078l-8 9" stroke="#c9cdd2" stroke-width="2"/>
<path d="M796 1093l8-11a5 5 0 0 1 5-8l-2 3 2 2 3-3a5 5 0 0 1-6 7l-7 11z" fill="#c9cdd2"/>
<rect x="820" y="1067" width="783" height="32" rx="2" fill="#bcbdbf"/>
<rect x="826" y="1075" width="19" height="16" fill="#8e9197"/><rect x="826" y="1075" width="19" height="3" fill="#6e7177"/>
<path d="M848 1081h8l-4 4.500z" fill="#8a8d92"/>
<text x="866" y="1088" textLength="125" lengthAdjust="spacing" style="font-family:'Liberation Mono',monospace;font-style:italic;font-size:14.700px;fill:#5a5e64">Type a command</text>
<path d="M1586 1086h9l-4.500-5z" fill="#4a4e55"/>

<!-- BOTTOM -->
<rect x="0" y="1099" width="1919" height="6" fill="#3b4453"/>
<rect x="0" y="1105" width="1919" height="31" fill="#222933"/>
<path d="M9 1135l11-30h75l-9 30z" fill="#3b4453"/>
<text x="30" y="1126" textLength="44" lengthAdjust="spacingAndGlyphs" style="font-weight:bold;fill:#eceef1">Model</text>
<text x="104" y="1126" class="p">A3</text><text x="152" y="1126" class="p">Layout2</text><text x="234" y="1126" class="p">A4_rd</text>
<path d="M134 1131l8-18M215 1131l8-18M286 1131l8-18M334 1131l8-18" stroke="#4a5361"/>
<path d="M312 1113v16M304 1121h16" stroke="#dfe2e6" stroke-width="2.500"/>

<!-- STATUS -->
<g fill="#3b4453"><rect x="1145" y="1107" width="59" height="29"/><rect x="1207" y="1107" width="80.500" height="29"/><rect x="1290" y="1107" width="242.500" height="29"/><rect x="1535" y="1107" width="131" height="29"/><rect x="1669.500" y="1107" width="81.500" height="29"/><rect x="1754" y="1107" width="32" height="29"/><rect x="1789" y="1107" width="66" height="29"/><rect x="1858" y="1107" width="61" height="29"/></g>
<g fill="#5b8ec4"><rect x="1352" y="1108" width="28" height="28"/><rect x="1453" y="1108" width="28" height="28"/><rect x="1483" y="1108" width="28" height="28"/><rect x="1535" y="1108" width="29" height="28"/></g>
<text x="1149" y="1127" style="font-size:14.800px;fill:#eef0f2">MODEL</text>
<path d="M1213 1113v19M1217 1113v19M1221 1113v19M1225 1113v19M1212 1116h19M1212 1120h19M1212 1124h19M1212 1128h19" stroke="#d5d8dc" fill="none"/>
<path d="M1243 1116h17M1243 1121h17M1243 1126h17" stroke="#d5d8dc" stroke-width="2.500" stroke-dasharray="2.500 4.500"/>
<use href="#dn" x="1277" y="1122"/>
<path d="M1295 1117h9M1299.500 1112v10" stroke="#d5d8dc"/><rect x="1304" y="1124" width="11" height="6" fill="#d5d8dc"/>
<path d="M1326 1111v22h20M1326 1124h9v9" fill="none" stroke="#d5d8dc"/>
<circle cx="1366" cy="1122" r="8.500" fill="none" stroke="#eef0f2" stroke-width="1.300"/><path d="M1360 1124h16M1368 1112l-8 12" stroke="#eef0f2" stroke-width="1.300"/>
<use href="#dn" x="1391" y="1122"/>
<path d="M1414 1111v22" stroke="#5cc77a"/><path d="M1408 1112l13 21" stroke="#e36a5a"/><rect x="1412" y="1120" width="4" height="4" fill="none" stroke="#f6c873"/>
<use href="#dn" x="1441" y="1122"/>
<path d="M1459 1131h18M1459 1131l9-11" fill="none" stroke="#f0f2f4" stroke-width="2"/>
<rect x="1489" y="1114" width="17" height="19" fill="none" stroke="#f0f2f4" stroke-width="1.300"/><rect x="1487" y="1111" width="5" height="5" fill="#5b8ec4" stroke="#f0f2f4"/>
<use href="#dn" x="1522" y="1122"/>
<path d="M1548 1111l4 11 3 11-6-6-6 6 3-11z" fill="#fff"/><circle cx="1558" cy="1116" r="3" fill="none" stroke="#fff" stroke-width="1.300"/>
<path d="M1580 1112l3 11 4 10-6-5-7 5 4-10z" fill="#c9cdd2"/><path d="M1587 1112l-3 5h3l-2 4" fill="none" stroke="#f0f2f4"/>
<path d="M1610 1112l3 11 4 10-7-5-7 5 4-10z" fill="#c9cdd2"/>
<text x="1631" y="1127" textLength="16" lengthAdjust="spacingAndGlyphs" style="font-size:14px;fill:#dfe3e8">1:1</text><use href="#dn" x="1656" y="1122"/>
<circle cx="1685" cy="1122" r="6" fill="none" stroke="#d8d8d8" stroke-width="4"/><path d="M1685 1112v4M1685 1128v4M1675 1122h4M1691 1122h4M1678 1115l3 3M1689 1126l3 3M1692 1115l-3 3M1681 1126l-3 3" stroke="#d8d8d8" stroke-width="3"/>
<use href="#dn" x="1710" y="1122"/>
<path d="M1736 1112v20M1726 1122h20" stroke="#dfe2e6" stroke-width="2.500"/>
<rect x="1760" y="1111" width="7" height="7" fill="none" stroke="#c9cdd2"/><circle cx="1775" cy="1120" r="3.500" fill="none" stroke="#c9cdd2"/><path d="M1765 1124l5 8h-10z" fill="none" stroke="#c9cdd2"/>
<circle cx="1803" cy="1118" r="9" fill="#5b8ec4"/><path d="M1803 1109v9M1795 1118h16" stroke="#f0f2f4"/><rect x="1793" y="1122" width="10" height="10" fill="#f6c873"/><path d="M1802 1127l5 6 8-10" fill="none" stroke="#5cc77a" stroke-width="2.500"/>
<path d="M1830 1122a8 8 0 1 1 8 8" fill="none" stroke="#c9cdd2"/><rect x="1826" y="1122" width="10" height="10" fill="#f6c873"/><circle cx="1842" cy="1127" r="5" fill="#6cb4e8"/>
<rect x="1865.500" y="1113.500" width="20" height="17" fill="none" stroke="#c9cdd2"/><path d="M1869 1127l5-5M1881 1116l-5 5" stroke="#c9cdd2"/>
<path d="M1893 1114h26M1893 1122h26M1893 1130h26" stroke="#dfe2e6" stroke-width="2.500"/>
</svg>
</body></html>
